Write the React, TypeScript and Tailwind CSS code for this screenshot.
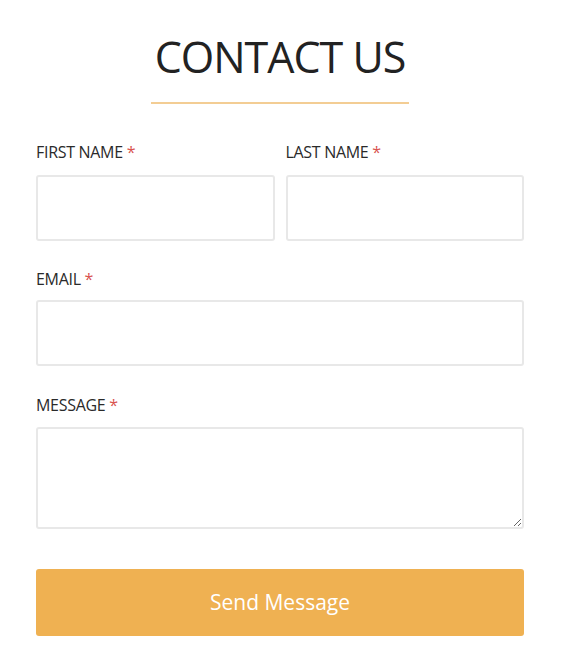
export default function App() {
  return (
    <div className="min-h-screen bg-white" style={{ fontFamily: '"Open Sans", "Noto Sans", sans-serif' }}>
      <div className="ml-[36px] w-[488px] pt-[35px]">
        {/* Heading */}
        <h1 className="text-center text-[43px] leading-[44px] text-[#222] tracking-[-1px]">CONTACT US</h1>
        <div className="mx-auto mt-[23px] h-[2px] w-[258px] bg-[#f3cd94]" />

        <form className="mt-[38px]" onSubmit={(e) => e.preventDefault()}>
          <div className="grid grid-cols-2 gap-x-[11px]">
            <Field label="FIRST NAME" gap="mt-[13px]" />
            <Field label="LAST NAME" gap="mt-[13px]" />
          </div>

          <div className="mt-[28px]">
            <Field label="EMAIL" gap="mt-[11px]" />
          </div>

          <div className="mt-[29px]">
            <label className="block text-[16px] leading-[20px] tracking-[-0.3px] text-[#2a2a2a]">
              MESSAGE <span className="text-[#d9534f]">*</span>
            </label>
            <textarea className="mt-[12px] block h-[102px] w-full rounded-[3px] border-2 border-[#e8e8e8] bg-white outline-none" />
          </div>

          <button
            type="submit"
            className="mt-[40px] flex h-[67px] w-full items-center justify-center rounded-[3px] bg-[#efb152] text-[21px] text-white"
          >
            Send Message
          </button>
        </form>
      </div>
    </div>
  );
}

function Field({ label, gap }: { label: string; gap: string }) {
  return (
    <div>
      <label className="block text-[16px] leading-[20px] tracking-[-0.3px] text-[#2a2a2a]">
        {label} <span className="text-[#d9534f]">*</span>
      </label>
      <input type="text" className={`${gap} block h-[66px] w-full rounded-[3px] border-2 border-[#e8e8e8] bg-white outline-none`} />
    </div>
  );
}
